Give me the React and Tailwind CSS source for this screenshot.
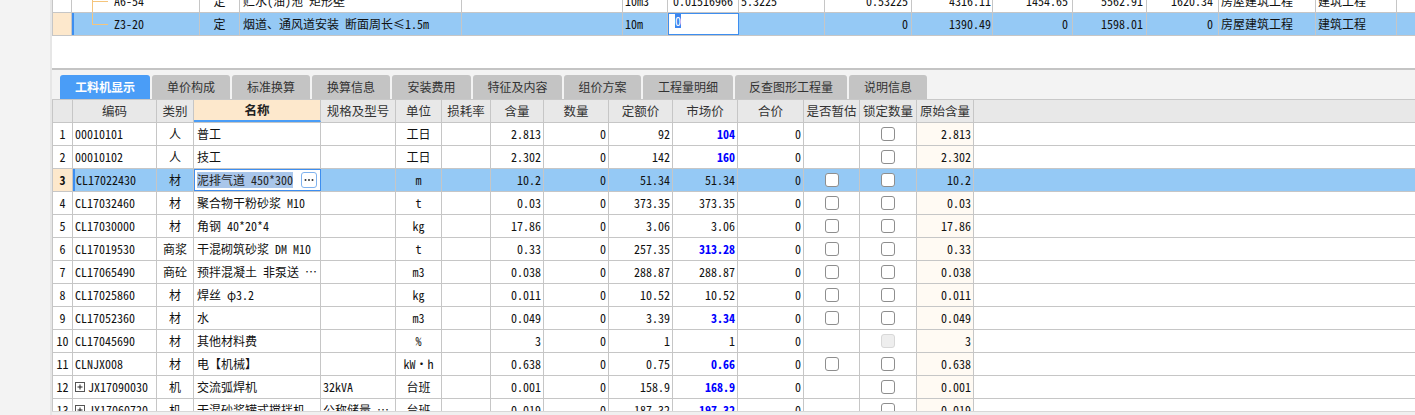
import React from "react";

const MONO = "font-['Noto_Sans_Mono_CJK_SC','Liberation_Mono','Noto_Sans_CJK_SC',monospace]";
const SANS = "font-['Noto_Sans_CJK_SC','Noto_Sans',sans-serif]";
const LINE = "border-[#c6c6c6]";

const topAbove = {
  code: "A6-54",
  type: "定",
  name: "贮水(油)池 矩形壁",
  unit: "10m3",
  qty: "0.01516966",
  c7: "5.3225",
  c8: "0.53225",
  c9: "4316.11",
  c10: "1454.65",
  c11: "5562.91",
  c12: "1620.34",
};

function TopSection() {
  const cell = `shrink-0 h-full border-r ${LINE} flex items-center overflow-hidden whitespace-nowrap`;
  return (
    <div className="h-[68px] shrink-0 overflow-hidden bg-white">
      <div className="-mt-[10px]">
        {/* partially visible row */}
        <div className={`flex h-[23px] border-b ${LINE} bg-white text-[12px] text-[#111]`}>
          <div className={`${cell} w-[20px] border-l`} />
          <div className={`${cell} w-[128px] relative pl-[42px] ${MONO}`}>
            <div className="absolute left-[20px] top-0 bottom-0 w-px bg-[#f5c57c]" />
            <div className="absolute left-[20px] top-[11px] w-[16px] h-px bg-[#f5c57c]" />
            {topAbove.code}
          </div>
          <div className={`${cell} w-[40px] justify-center ${SANS}`}>{topAbove.type}</div>
          <div className={`${cell} w-[222px] pl-[3px] ${MONO}`}>{topAbove.name}</div>
          <div className={`${cell} w-[161px]`} />
          <div className={`${cell} w-[45px] pl-[2px] ${MONO}`}>{topAbove.unit}</div>
          <div className={`${cell} w-[71px] pl-[5px] ${MONO}`}>{topAbove.qty}</div>
          <div className={`${cell} w-[86px] pl-[2px] ${MONO}`}>{topAbove.c7}</div>
          <div className={`${cell} w-[87px] justify-end pr-[3px] ${MONO}`}>{topAbove.c8}</div>
          <div className={`${cell} w-[81px] justify-end pr-[1px] ${MONO}`}>{topAbove.c9}</div>
          <div className={`${cell} w-[80px] justify-end pr-[4px] ${MONO}`}>{topAbove.c10}</div>
          <div className={`${cell} w-[74px] justify-end pr-[3px] ${MONO}`}>{topAbove.c11}</div>
          <div className={`${cell} w-[72px] justify-end pr-[5px] ${MONO}`}>{topAbove.c12}</div>
          <div className={`${cell} w-[97px] pl-[2px] ${MONO}`}>房屋建筑工程</div>
          <div className={`${cell} w-[81px] pl-[2px] ${MONO}`}>建筑工程</div>
          <div className="flex-1" />
        </div>
        {/* selected row */}
        <div className={`flex h-[23px] border-b ${LINE} bg-[#95c9f5] text-[12px] text-[#111]`}>
          <div className={`${cell} w-[20px] border-l bg-[#fde8cc]`} />
          <div className={`${cell} w-[128px] relative border-l-2 border-l-[#3d8ef0] pl-[40px] ${MONO}`}>
            <div className="absolute left-[18px] top-0 h-[11px] w-px bg-[#f5c57c]" />
            <div className="absolute left-[18px] top-[11px] w-[16px] h-px bg-[#f5c57c]" />
            Z3-20
          </div>
          <div className={`${cell} w-[40px] justify-center ${SANS}`}>定</div>
          <div className={`${cell} w-[222px] pl-[3px] ${MONO}`}>烟道、通风道安装 断面周长≤1.5m</div>
          <div className={`${cell} w-[161px]`} />
          <div className={`${cell} w-[45px] pl-[2px] ${MONO}`}>10m</div>
          <div className={`shrink-0 h-full w-[71px] bg-white border border-[#3d8ef0] flex items-start pl-[6px] ${MONO}`}>
            <span className="bg-[#3d86ef] text-white leading-[14px] h-[14px]">0</span>
          </div>
          <div className={`${cell} w-[86px]`} />
          <div className={`${cell} w-[87px] justify-end pr-[3px] ${MONO}`}>0</div>
          <div className={`${cell} w-[81px] justify-end pr-[1px] ${MONO}`}>1390.49</div>
          <div className={`${cell} w-[80px] justify-end pr-[4px] ${MONO}`}>0</div>
          <div className={`${cell} w-[74px] justify-end pr-[3px] ${MONO}`}>1598.01</div>
          <div className={`${cell} w-[72px] justify-end pr-[5px] ${MONO}`}>0</div>
          <div className={`${cell} w-[97px] pl-[2px] ${MONO}`}>房屋建筑工程</div>
          <div className={`${cell} w-[81px] pl-[2px] ${MONO}`}>建筑工程</div>
          <div className="flex-1" />
        </div>
      </div>
    </div>
  );
}

const TABS = [
  { label: "工料机显示", w: "w-[90px]" },
  { label: "单价构成", w: "w-[78px]" },
  { label: "标准换算", w: "w-[78px]" },
  { label: "换算信息", w: "w-[78px]" },
  { label: "安装费用", w: "w-[79px]" },
  { label: "特征及内容", w: "w-[89px]" },
  { label: "组价方案", w: "w-[77px]" },
  { label: "工程量明细", w: "w-[90px]" },
  { label: "反查图形工程量", w: "w-[112px]" },
  { label: "说明信息", w: "w-[78px]" },
];

function Tabs() {
  return (
    <div className={`h-[30px] shrink-0 bg-[#f3f3f3] border-b border-[#c8c8c8] flex items-end pl-[8px] gap-[2px] ${SANS}`}>
      {TABS.map((t, i) => (
        <div
          key={t.label}
          className={`${t.w} h-[24px] rounded-t-[3px] flex items-center justify-center text-[12px] ${
            i === 0 ? "bg-[#4a9df7] text-white font-bold" : "bg-[#c4c4c4] text-[#333]"
          }`}
        >
          {t.label}
        </div>
      ))}
    </div>
  );
}

const HEAD = [
  { l: "", w: "w-[21px] border-l" },
  { l: "编码", w: "w-[84px]" },
  { l: "类别", w: "w-[37px]" },
  { l: "名称", w: "w-[127px]" },
  { l: "规格及型号", w: "w-[75px]" },
  { l: "单位", w: "w-[46px]" },
  { l: "损耗率", w: "w-[49px]" },
  { l: "含量", w: "w-[53px]" },
  { l: "数量", w: "w-[65px]" },
  { l: "定额价", w: "w-[64px]" },
  { l: "市场价", w: "w-[65px]" },
  { l: "合价", w: "w-[66px]" },
  { l: "是否暂估", w: "w-[56px]" },
  { l: "锁定数量", w: "w-[57px]" },
  { l: "原始含量", w: "w-[57px]" },
];

const ROWS = [
  { n: "1", code: "00010101", type: "人", name: "普工", unit: "工日", hl: "2.813", dj: "92", sc: "104", blue: true, zg: null, sd: "cb", ys: "2.813" },
  { n: "2", code: "00010102", type: "人", name: "技工", unit: "工日", hl: "2.302", dj: "142", sc: "160", blue: true, zg: null, sd: "cb", ys: "2.302" },
  { n: "3", code: "CL17022430", type: "材", name: "泥排气道 450*300", unit: "m", hl: "10.2", dj: "51.34", sc: "51.34", zg: "cb", sd: "cb", ys: "10.2", sel: true },
  { n: "4", code: "CL17032460", type: "材", name: "聚合物干粉砂浆 M10", unit: "t", hl: "0.03", dj: "373.35", sc: "373.35", zg: "cb", sd: "cb", ys: "0.03" },
  { n: "5", code: "CL17030000", type: "材", name: "角钢 40*20*4", unit: "kg", hl: "17.86", dj: "3.06", sc: "3.06", zg: "cb", sd: "cb", ys: "17.86" },
  { n: "6", code: "CL17019530", type: "商浆", name: "干混砌筑砂浆 DM M10", unit: "t", hl: "0.33", dj: "257.35", sc: "313.28", blue: true, zg: "cb", sd: "cb", ys: "0.33" },
  { n: "7", code: "CL17065490", type: "商砼", name: "预拌混凝土 非泵送 …", unit: "m3", hl: "0.038", dj: "288.87", sc: "288.87", zg: "cb", sd: "cb", ys: "0.038" },
  { n: "8", code: "CL17025860", type: "材", name: "焊丝 φ3.2", unit: "kg", hl: "0.011", dj: "10.52", sc: "10.52", zg: "cb", sd: "cb", ys: "0.011" },
  { n: "9", code: "CL17052360", type: "材", name: "水", unit: "m3", hl: "0.049", dj: "3.39", sc: "3.34", blue: true, zg: "cb", sd: "cb", ys: "0.049" },
  { n: "10", code: "CL17045690", type: "材", name: "其他材料费", unit: "%", hl: "3", dj: "1", sc: "1", zg: null, sd: "dis", ys: "3" },
  { n: "11", code: "CLNJX008", type: "材", name: "电【机械】", unit: "kW·h", hl: "0.638", dj: "0.75", sc: "0.66", blue: true, zg: "cb", sd: "cb", ys: "0.638" },
  { n: "12", code: "JX17090030", plus: true, type: "机", name: "交流弧焊机", spec: "32kVA", unit: "台班", hl: "0.001", dj: "158.9", sc: "168.9", blue: true, zg: null, sd: "cb", ys: "0.001" },
  { n: "13", code: "JX17060720", plus: true, type: "机", name: "干混砂浆罐式搅拌机", spec: "公称储量 …", unit: "台班", hl: "0.019", dj: "187.32", sc: "197.32", blue: true, zg: null, sd: "cb", ys: "0.019" },
];

function Checkbox({ disabled }) {
  return (
    <div
      className={`w-[14px] h-[14px] rounded-[3px] border ${
        disabled ? "border-[#d8d8d8] bg-[#eeeeee]" : "border-[#8e8e8e] bg-white"
      }`}
    />
  );
}

function PlusBox() {
  return (
    <svg width="10" height="10" viewBox="0 0 10 10" className="mr-[3px] shrink-0">
      <rect x="0.5" y="0.5" width="9" height="9" fill="white" stroke="#555" />
      <path d="M2.5 5h5M5 2.5v5" stroke="#222" strokeWidth="1" />
    </svg>
  );
}

function Dots() {
  return (
    <div className="w-[16px] h-[16px] rounded-[3px] border border-[#7fb2ee] bg-white flex items-center justify-center shrink-0">
      <svg width="10" height="4" viewBox="0 0 10 4">
        <circle cx="1.5" cy="2" r="1" fill="#333" />
        <circle cx="5" cy="2" r="1" fill="#333" />
        <circle cx="8.5" cy="2" r="1" fill="#333" />
      </svg>
    </div>
  );
}

function GridRow({ r }) {
  const sel = r.sel;
  const c = `shrink-0 h-full border-r ${LINE} flex items-center overflow-hidden whitespace-nowrap`;
  const num = `${c} justify-end pr-[2px] ${MONO}`;
  return (
    <div className={`flex h-[23px] shrink-0 border-b ${LINE} text-[12px] text-[#111] ${sel ? "bg-[#95c9f5]" : "bg-white"}`}>
      <div className={`${c} w-[21px] border-l justify-center ${MONO} ${sel ? "bg-[#fde8cc] font-bold" : ""}`}>{r.n}</div>
      <div className={`${c} w-[84px] ${MONO} ${sel ? "border-l-2 border-l-[#3d8ef0] pl-[1px]" : "pl-[2px]"}`}>
        {r.plus && <PlusBox />}
        {r.code}
      </div>
      <div className={`${c} w-[37px] justify-center ${SANS}`}>{r.type}</div>
      {sel ? (
        <div className={`shrink-0 h-full w-[127px] bg-white border border-[#3d8ef0] flex items-center justify-between pl-[2px] pr-[3px] ${MONO}`}>
          <span className="bg-[#a9c6ea] leading-[16px] text-[#222]">{r.name}</span>
          <Dots />
        </div>
      ) : (
        <div className={`${c} w-[127px] pl-[3px] ${MONO}`}>{r.name}</div>
      )}
      <div className={`${c} w-[75px] pl-[2px] ${MONO}`}>{r.spec || ""}</div>
      <div className={`${c} w-[46px] justify-center ${MONO}`}>{r.unit}</div>
      <div className={`${c} w-[49px]`} />
      <div className={`${num} w-[53px]`}>{r.hl}</div>
      <div className={`${num} w-[65px]`}>0</div>
      <div className={`${num} w-[64px]`}>{r.dj}</div>
      <div className={`${num} w-[65px] ${r.blue ? "text-[#0000ff] font-bold" : ""}`}>{r.sc}</div>
      <div className={`${num} w-[66px]`}>0</div>
      <div className={`${c} w-[56px] justify-center`}>{r.zg && <Checkbox />}</div>
      <div className={`${c} w-[57px] justify-center`}>
        <Checkbox disabled={r.sd === "dis"} />
      </div>
      <div className={`${num} w-[57px] ${sel ? "" : "bg-[#fffaf3]"}`}>{r.ys}</div>
    </div>
  );
}

function Grid() {
  return (
    <div className="flex-1 min-h-0 overflow-hidden bg-white flex flex-col">
      <div className={`flex h-[23px] shrink-0 border-b ${LINE} bg-[#e8e8e8] text-[12.5px] text-[#333] ${SANS}`}>
        {HEAD.map((h) => (
          <div
            key={h.w}
            className={`${h.w} shrink-0 h-full border-r ${LINE} flex items-center justify-center whitespace-nowrap overflow-hidden ${
              h.l === "名称" ? "bg-[#fde8cc] font-bold text-[#222] border-b-2 border-b-[#4a9df7]" : ""
            }`}
          >
            {h.l}
          </div>
        ))}
      </div>
      {ROWS.map((r) => (
        <GridRow key={r.n} r={r} />
      ))}
    </div>
  );
}

export default function App() {
  return (
    <div className="w-[1415px] h-[415px] flex overflow-hidden bg-white">
      <div className="w-[52px] shrink-0 bg-[#f3f3f3] border-r-2 border-[#e6e6e6]" />
      <div className="flex-1 min-w-0 flex flex-col">
        <TopSection />
        <div className="h-[2px] shrink-0 bg-[#c4c4c4]" />
        <Tabs />
        <Grid />
        <div className="h-[4px] shrink-0 bg-[#f0f0f0] border-t border-[#d8d8d8]" />
      </div>
    </div>
  );
}
